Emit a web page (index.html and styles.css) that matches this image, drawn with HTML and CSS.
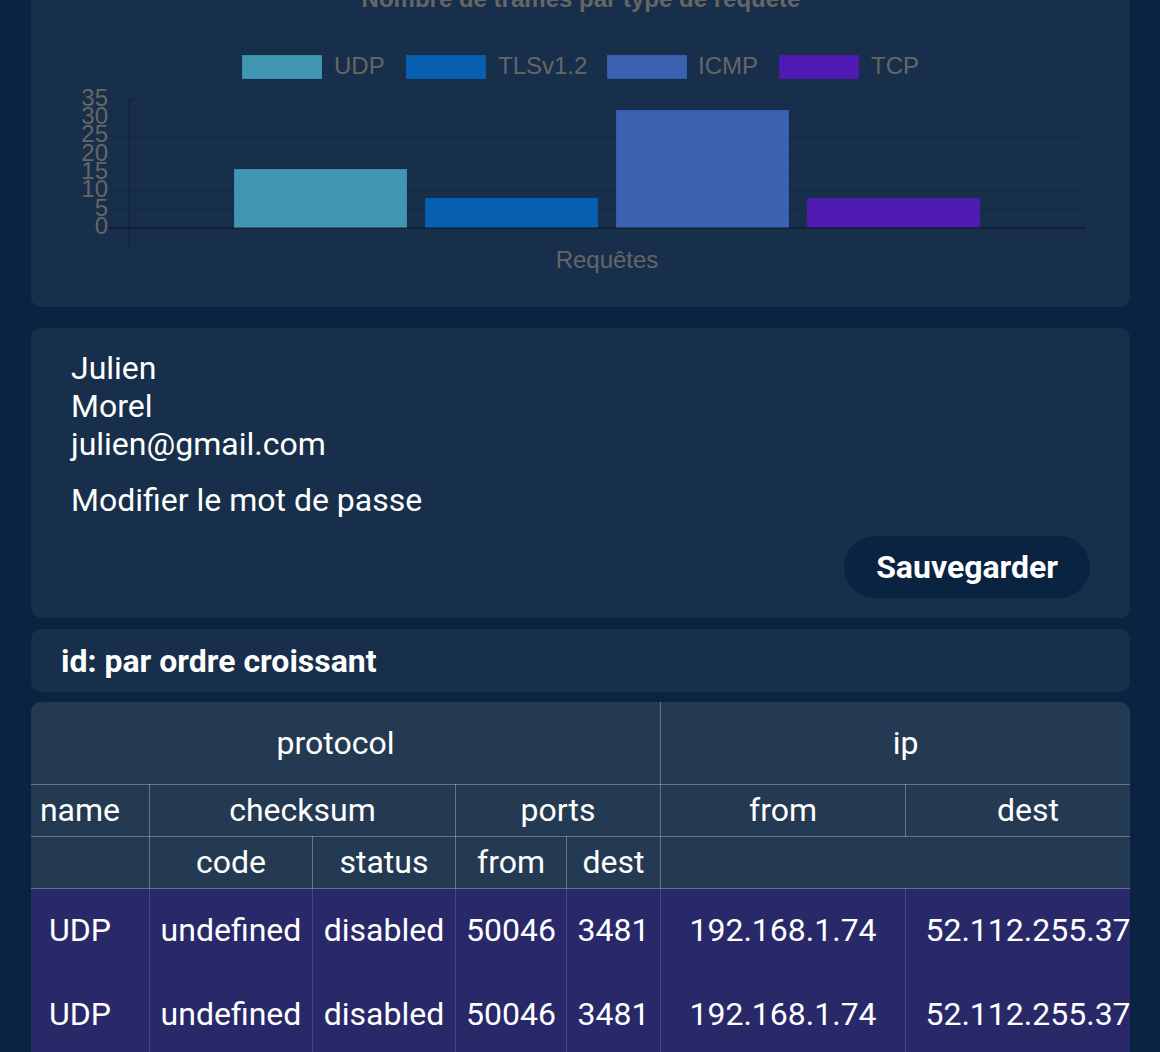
FILE: index.html
```html
<!DOCTYPE html>
<html lang="fr">
<head>
<meta charset="utf-8">
<title>Profil</title>
<link rel="stylesheet" href="styles.css">
</head>
<body>
<main class="page">
  <section class="card chart-card">
    <svg class="chart" width="1099" height="347" viewBox="0 0 1099 347" xmlns="http://www.w3.org/2000/svg">
      <text class="chart-title" x="550" y="47" text-anchor="middle">Nombre de trames par type de requête</text>
      <g class="legend">
        <rect x="211.5" y="95.5" width="79" height="23" fill="#4096b0" stroke="#3d8cab"/>
        <text x="303" y="114">UDP</text>
        <rect x="375.5" y="95.5" width="79" height="23" fill="#065fb0" stroke="#0b5aa6"/>
        <text x="467" y="114">TLSv1.2</text>
        <rect x="576.5" y="95.5" width="79" height="23" fill="#3a62b0" stroke="#355ca6"/>
        <text x="667" y="114">ICMP</text>
        <rect x="748.5" y="95.5" width="79" height="23" fill="#4f1bb2" stroke="#4a1aa8"/>
        <text x="840" y="114">TCP</text>
      </g>
      <g class="grid">
        <line x1="78" y1="139.5" x2="1054" y2="139.5"/>
        <line x1="78" y1="157.5" x2="1054" y2="157.5"/>
        <line x1="78" y1="176.5" x2="1054" y2="176.5"/>
        <line x1="78" y1="194.5" x2="1054" y2="194.5"/>
        <line x1="78" y1="212.5" x2="1054" y2="212.5"/>
        <line x1="78" y1="231.5" x2="1054" y2="231.5"/>
        <line x1="78" y1="249.5" x2="1054" y2="249.5"/>
        <line x1="1054.5" y1="139" x2="1054.5" y2="288"/>
      </g>
      <g class="ticks">
        <text x="77" y="145.5">35</text>
        <text x="77" y="163.8">30</text>
        <text x="77" y="182.2">25</text>
        <text x="77" y="200.6">20</text>
        <text x="77" y="219">15</text>
        <text x="77" y="237.4">10</text>
        <text x="77" y="255.8">5</text>
        <text x="77" y="274">0</text>
      </g>
      <g class="bars">
        <rect x="203.5" y="209.5" width="172" height="58" fill="#4096b0" stroke="#3d8cab"/>
        <rect x="394.5" y="238.5" width="172" height="29" fill="#065fb0" stroke="#0b5aa6"/>
        <rect x="585.5" y="150.5" width="172" height="117" fill="#3a62b0" stroke="#355ca6"/>
        <rect x="776.5" y="238.5" width="172" height="29" fill="#4f1bb2" stroke="#4a1aa8"/>
      </g>
      <g class="axis">
        <line x1="78" y1="268" x2="1054" y2="268"/>
        <line x1="98.5" y1="139" x2="98.5" y2="288"/>
      </g>
      <text class="axis-title" x="576" y="308" text-anchor="middle">Requêtes</text>
    </svg>
  </section>

  <section class="card profile">
    <div class="field">Julien</div>
    <div class="field">Morel</div>
    <div class="field">julien@gmail.com</div>
    <a class="pwd-link">Modifier le mot de passe</a>
    <div class="actions">
      <button class="btn" type="button">Sauvegarder</button>
    </div>
  </section>

  <section class="card sort">id: par ordre croissant</section>

  <section class="card table-card">
    <table class="frames">
      <colgroup>
        <col class="c-name">
        <col class="c-code">
        <col class="c-status">
        <col class="c-pfrom">
        <col class="c-pdest">
        <col class="c-ip">
        <col class="c-ip">
      </colgroup>
      <thead>
        <tr class="r-top">
          <th colspan="5">protocol</th>
          <th colspan="2">ip</th>
        </tr>
        <tr class="r-mid">
          <th>name</th>
          <th colspan="2">checksum</th>
          <th colspan="2">ports</th>
          <th>from</th>
          <th>dest</th>
        </tr>
        <tr class="r-mid">
          <th></th>
          <th>code</th>
          <th>status</th>
          <th>from</th>
          <th>dest</th>
          <th colspan="2"></th>
        </tr>
      </thead>
      <tbody>
        <tr>
          <td>UDP</td>
          <td>undefined</td>
          <td>disabled</td>
          <td>50046</td>
          <td>3481</td>
          <td>192.168.1.74</td>
          <td>52.112.255.37</td>
        </tr>
        <tr>
          <td>UDP</td>
          <td>undefined</td>
          <td>disabled</td>
          <td>50046</td>
          <td>3481</td>
          <td>192.168.1.74</td>
          <td>52.112.255.37</td>
        </tr>
      </tbody>
    </table>
  </section>
</main>
</body>
</html>
```

FILE: styles.css
```css
html {
  overflow: hidden;
}

body {
  margin: 0;
  background: #0a2340;
  color: #ffffff;
  font-family: Roboto, "Noto Sans", Arial, sans-serif;
  font-size: 32px;
}

.page {
  display: flex;
  flex-direction: column;
  padding: 0 30px 0 31px;
}

.card {
  background: #172f4a;
  border-radius: 10px;
}

/* Chart */
.chart-card {
  height: 347px;
  margin-top: -40px;
  margin-bottom: 21px;
}

.chart {
  display: block;
  font-family: "Liberation Sans", Arial, sans-serif;
  font-size: 24px;
}

.chart text {
  fill: #666666;
}

.chart .chart-title {
  font-weight: bold;
}

.chart .ticks text {
  text-anchor: end;
}

.chart .grid line {
  stroke: rgba(0, 0, 0, 0.12);
  stroke-width: 1;
}

.chart .axis line {
  stroke: rgba(0, 0, 0, 0.3);
  stroke-width: 1;
}

.chart .axis line:first-child {
  stroke-width: 2;
}

/* Profile */
.profile {
  padding: 21px 40px 20px;
  margin-bottom: 11px;
  display: flex;
  flex-direction: column;
}

.field {
  line-height: 38px;
}

.pwd-link {
  display: block;
  margin: 18px 0 17px;
  color: #ffffff;
  line-height: 38px;
}

.actions {
  display: flex;
  justify-content: flex-end;
}

.btn {
  background: #0a2340;
  color: #ffffff;
  border: none;
  border-radius: 31px;
  height: 62px;
  padding: 0 32px;
  font-family: Roboto, "Noto Sans", Arial, sans-serif;
  font-size: 32px;
  font-weight: bold;
}

/* Sort bar */
.sort {
  padding: 0 30px;
  height: 63px;
  display: flex;
  align-items: center;
  font-weight: bold;
  margin-bottom: 10px;
}

/* Table */
.table-card {
  display: flex;
  justify-content: center;
  overflow: hidden;
  border-radius: 10px 10px 0 0;
}

.frames {
  flex: none;
  width: 1140px;
  table-layout: fixed;
  border-collapse: collapse;
  font-size: 32px;
}

.c-name { width: 139px; }
.c-code { width: 163px; }
.c-status { width: 143px; }
.c-pfrom { width: 111px; }
.c-pdest { width: 94px; }
.c-ip { width: 245px; }

.frames th,
.frames td {
  padding: 0;
  text-align: center;
  vertical-align: middle;
  font-weight: normal;
  white-space: nowrap;
  line-height: 38px;
}

.frames thead {
  background: #243a52;
}

.frames th {
  border: 1px solid rgba(255, 255, 255, 0.3);
}

.frames .r-top th {
  border-top: none;
}

.r-top {
  height: 82px;
}

.r-mid {
  height: 52px;
}

.frames tbody tr {
  height: 84px;
  background: #29296a;
}

.frames td {
  border-left: 1px solid rgba(255, 255, 255, 0.15);
  border-right: 1px solid rgba(255, 255, 255, 0.15);
}
```
